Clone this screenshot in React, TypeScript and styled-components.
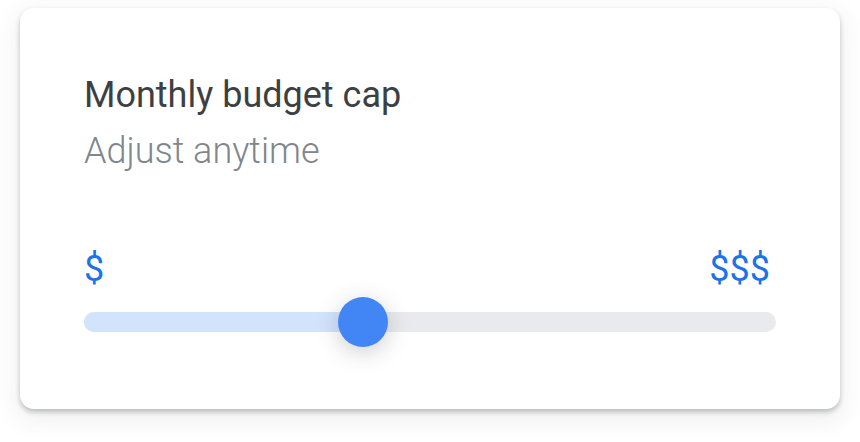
import React from 'react';
import styled, { createGlobalStyle } from 'styled-components';

const GlobalStyle = createGlobalStyle`
  html, body {
    margin: 0;
    padding: 0;
    background-color: #ffffff;
  }

  body {
    font-family: Roboto, 'Noto Sans', sans-serif;
  }
`;

const Page = styled.div`
  padding: 8px 20px 33px;
`;

const Card = styled.section`
  box-sizing: border-box;
  height: 401px;
  padding: 65px 64px 0 64px;
  border-radius: 14px;
  background-color: #ffffff;
  box-shadow: 0 3px 5px rgba(60, 64, 67, 0.3), 0 8px 24px 4px rgba(60, 64, 67, 0.08);
`;

const Title = styled.h2`
  margin: 0;
  color: #3c4043;
  font-size: 36px;
  font-weight: 400;
  line-height: 44px;
`;

const Subtitle = styled.p`
  margin: 12px 0 0;
  color: #80868b;
  font-size: 36px;
  font-weight: 300;
  line-height: 44px;
`;

const LabelRow = styled.div`
  display: flex;
  justify-content: space-between;
  margin-top: 74px;
  padding-right: 6px;
  color: #1a73e8;
  font-size: 36px;
  line-height: 44px;
`;

const Track = styled.div`
  position: relative;
  height: 20px;
  margin-top: 21px;
  border-radius: 10px;
  background-color: #e8eaed;
`;

const Fill = styled.div`
  height: 100%;
  border-radius: 10px 0 0 10px;
  background-color: #d2e3fc;
`;

const Thumb = styled.div`
  position: absolute;
  top: 50%;
  width: 50px;
  height: 50px;
  border-radius: 50%;
  background-color: #4285f4;
  transform: translate(-50%, -50%);
  box-shadow: 0 5px 22px rgba(60, 64, 67, 0.26);
`;

const BudgetSlider: React.FC<{ value: number }> = ({ value }) => (
  <Track>
    <Fill style={{ width: `${value}%` }} />
    <Thumb style={{ left: `${value}%` }} />
  </Track>
);

const App: React.FC = () => (
  <React.Fragment>
    <GlobalStyle />
    <Page>
      <Card>
        <Title>Monthly budget cap</Title>
        <Subtitle>Adjust anytime</Subtitle>
        <LabelRow>
          <span>$</span>
          <span>$$$</span>
        </LabelRow>
        <BudgetSlider value={40.3} />
      </Card>
    </Page>
  </React.Fragment>
);

export default App;
